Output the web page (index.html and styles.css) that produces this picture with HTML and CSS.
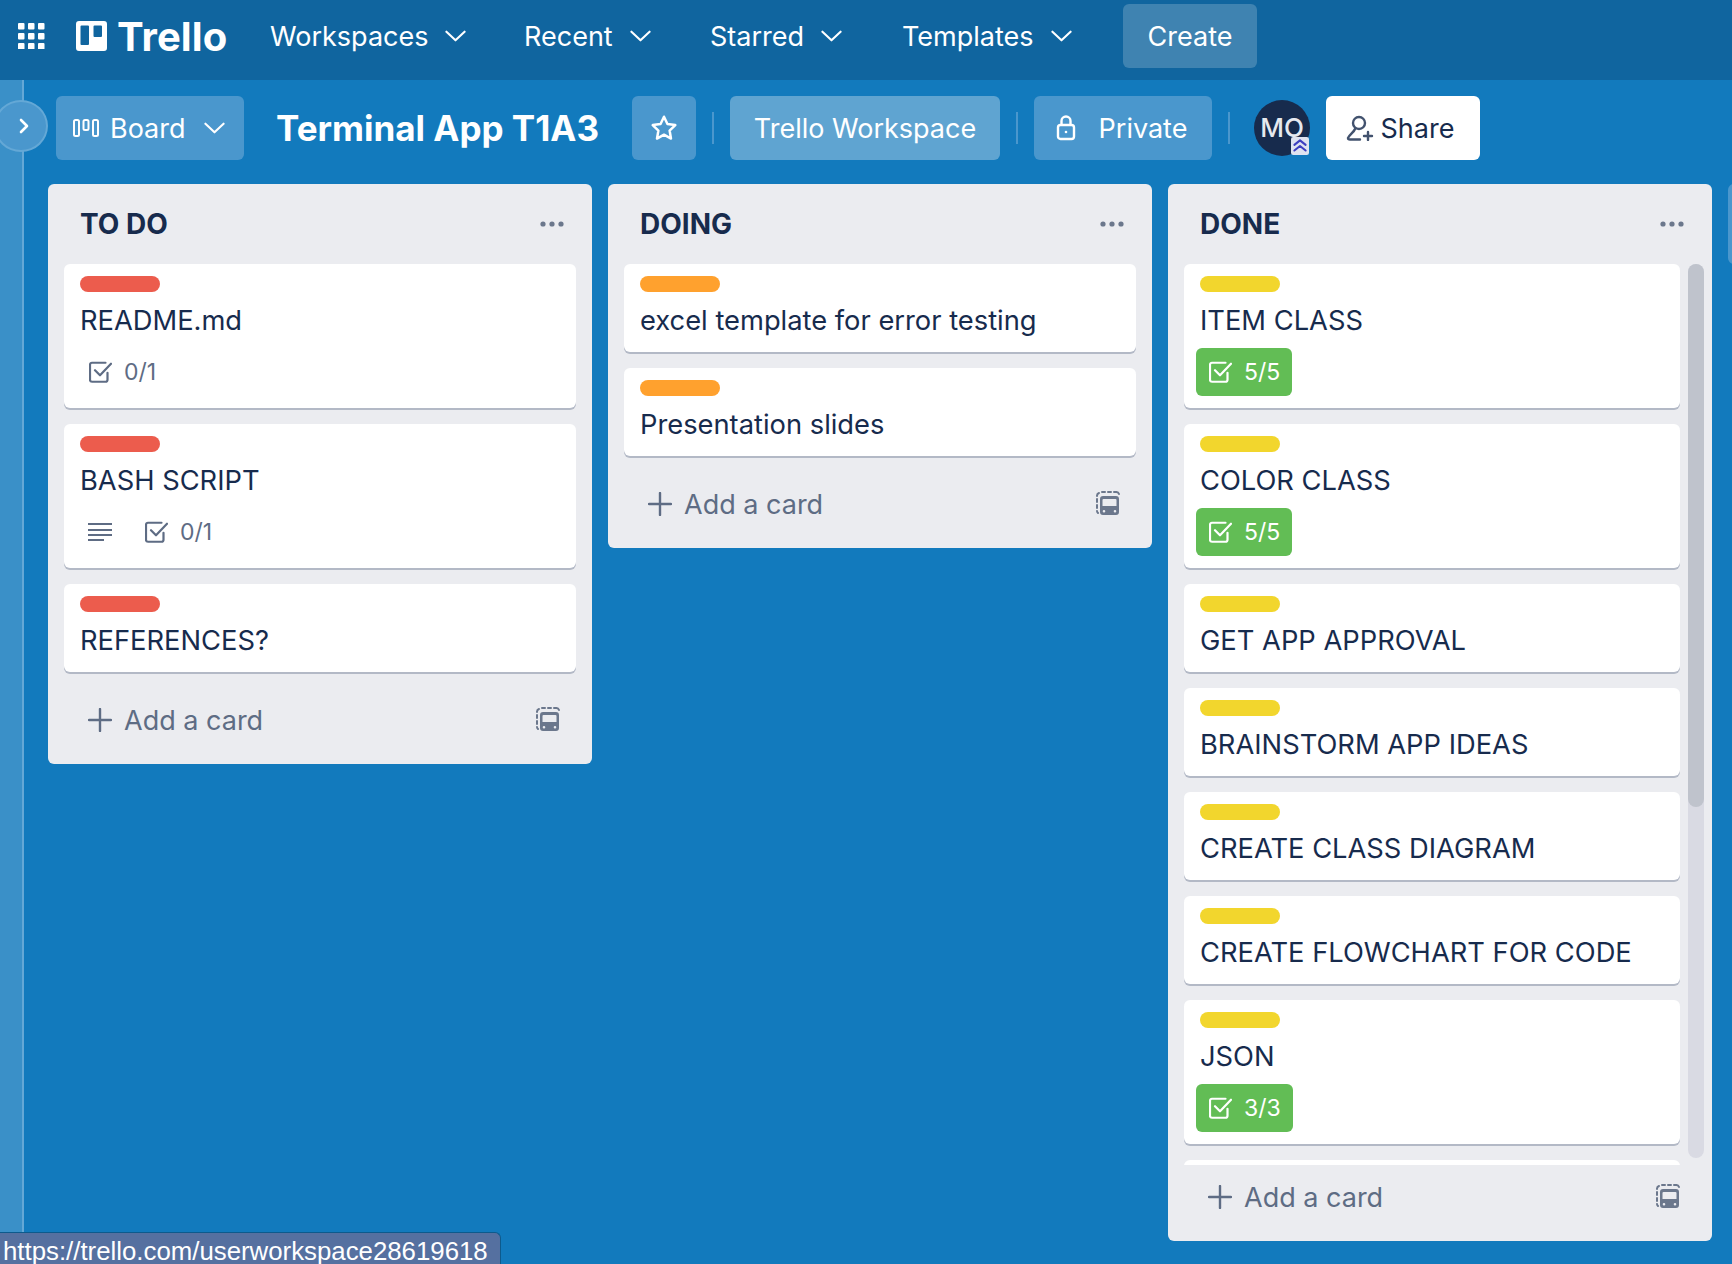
FILE: index.html
```html
<!DOCTYPE html>
<html>

<head>
    <meta charset="UTF-8">
    <title>Terminal App T1A3 | Trello</title>
    <link rel="stylesheet" href="styles.css">
</head>

<body>
    <svg class="icon-defs" xmlns="http://www.w3.org/2000/svg">
        <symbol id="i-chevron" viewBox="0 0 22 12">
            <path d="M1.5 1.5 11 10.5 20.5 1.5" fill="none" stroke="currentColor" stroke-width="2.2" stroke-linecap="round" stroke-linejoin="round" />
        </symbol>
        <symbol id="i-check" viewBox="0.500 1.500 23 21.500">
            <path d="M19 13v7a2 2 0 0 1-2 2H3.500a2 2 0 0 1-2-2V5a2 2 0 0 1 2-2H17" fill="none" stroke="currentColor" stroke-width="2.200" stroke-linecap="round" />
            <path d="M6.500 10.500 11.500 15.500 22.500 4" fill="none" stroke="currentColor" stroke-width="2.200" stroke-linecap="round" stroke-linejoin="round" />
        </symbol>
        <symbol id="i-desc" viewBox="0 0 24 20">
            <path d="M0 2h24M0 8h24M0 13h24M0 18h16" fill="none" stroke="currentColor" stroke-width="2.2" />
        </symbol>
        <symbol id="i-plus" viewBox="0 0 24 24">
            <path d="M12 1v22M1 12h22" fill="none" stroke="currentColor" stroke-width="2.4" stroke-linecap="round" />
        </symbol>
        <symbol id="i-template" viewBox="0 0 24 24">
            <path d="M1 8v3M1 14v3M1 5a3 3 0 0 1 2-3M6 1h3M12 1h3M18 1h2a3 3 0 0 1 3 2M1 20a3 3 0 0 0 1 2" fill="none" stroke="currentColor" stroke-width="2" stroke-linecap="round" />
            <path d="M7 5h13a3 3 0 0 1 3 3v13a3 3 0 0 1-3 3H7a3 3 0 0 1-3-3V8a3 3 0 0 1 3-3zM7.500 8a1 1 0 0 0-1 1v6h14V9a1 1 0 0 0-1-1zM8 19a1.300 1.300 0 1 0 0 2.600A1.300 1.300 0 0 0 8 19zm11 0a1.300 1.300 0 1 0 0 2.600 1.300 1.300 0 0 0 0-2.600z" fill="currentColor" fill-rule="evenodd" />
        </symbol>
        <symbol id="i-dots" viewBox="0 0 24 6">
            <circle cx="3" cy="3" r="2.600" fill="currentColor" />
            <circle cx="12" cy="3" r="2.600" fill="currentColor" />
            <circle cx="21" cy="3" r="2.600" fill="currentColor" />
        </symbol>
    </svg>

    <header class="topbar">
        <svg class="apps-icon" viewBox="0 0 27 26" fill="#fff">
            <rect x="0" y="0" width="6.500" height="6.500" rx="1" />
            <rect x="10" y="0" width="6.500" height="6.500" rx="1" />
            <rect x="20" y="0" width="6.500" height="6.500" rx="1" />
            <rect x="0" y="10" width="6.500" height="6.500" rx="1" />
            <rect x="10" y="10" width="6.500" height="6.500" rx="1" />
            <rect x="20" y="10" width="6.500" height="6.500" rx="1" />
            <rect x="0" y="20" width="6.500" height="6.500" rx="1" />
            <rect x="10" y="20" width="6.500" height="6.500" rx="1" />
            <rect x="20" y="20" width="6.500" height="6.500" rx="1" />
        </svg>
        <div class="logo">
            <svg class="logo-mark" viewBox="0 0 31 30">
                <path fill="#fff" fill-rule="evenodd" d="M3 0h25a3 3 0 0 1 3 3v24a3 3 0 0 1-3 3H3a3 3 0 0 1-3-3V3a3 3 0 0 1 3-3zM5.500 4.500a1 1 0 0 0-1 1V23a1 1 0 0 0 1 1h6.500a1 1 0 0 0 1-1V5.500a1 1 0 0 0-1-1zm13 0a1 1 0 0 0-1 1V15a1 1 0 0 0 1 1h6.500a1 1 0 0 0 1-1V5.500a1 1 0 0 0-1-1z" />
            </svg>
            <span class="logo-text">Trello</span>
        </div>
        <nav class="nav">
            <a class="nav-item nav-workspaces">Workspaces <svg class="chev"><use href="#i-chevron" /></svg></a>
            <a class="nav-item nav-recent">Recent <svg class="chev"><use href="#i-chevron" /></svg></a>
            <a class="nav-item nav-starred">Starred <svg class="chev"><use href="#i-chevron" /></svg></a>
            <a class="nav-item nav-templates">Templates <svg class="chev"><use href="#i-chevron" /></svg></a>
            <button class="create-btn">Create</button>
        </nav>
    </header>

    <div class="main">
        <aside class="sidebar">
            <button class="sidebar-toggle">
                <svg viewBox="0 0 10 16" width="10" height="16">
                    <path d="M2 2l6 6-6 6" fill="none" stroke="#fff" stroke-width="2.600" stroke-linecap="round" stroke-linejoin="round" />
                </svg>
            </button>
        </aside>

        <div class="content">
            <div class="boardbar">
                <button class="bar-btn btn-board">
                    <svg class="board-icon" viewBox="0 0 26 18" fill="none" stroke="#fff" stroke-width="2">
                        <rect x="1" y="1" width="5" height="16" rx="1.500" />
                        <rect x="10.500" y="1" width="5" height="10" rx="1.500" />
                        <rect x="20" y="1" width="5" height="16" rx="1.500" />
                    </svg>
                    Board
                    <svg class="chev"><use href="#i-chevron" /></svg>
                </button>
                <h1 class="board-title">Terminal App T1A3</h1>
                <button class="bar-btn btn-star">
                    <svg viewBox="0 0 26 26" width="28" height="28">
                        <path d="M13 2.500l3.200 6.800 7.300 1-5.300 5.100 1.300 7.400L13 19.200l-6.500 3.600 1.300-7.400L2.500 10.300l7.300-1z" fill="none" stroke="#fff" stroke-width="2.300" stroke-linejoin="round" />
                    </svg>
                </button>
                <span class="bar-divider"></span>
                <button class="bar-btn btn-workspace">Trello Workspace</button>
                <span class="bar-divider"></span>
                <button class="bar-btn btn-private">
                    <svg viewBox="0 0 20 26" width="20" height="26" fill="none" stroke="#fff" stroke-width="2.400">
                        <rect x="2" y="10" width="16" height="14" rx="2.500" />
                        <path d="M5.500 10V6a4.500 4.500 0 0 1 9 0v4" />
                        <circle cx="10" cy="17" r="1.300" fill="#fff" stroke="none" />
                    </svg>
                    Private
                </button>
                <span class="bar-divider"></span>
                <div class="avatar">
                    <span class="avatar-text">MO</span>
                    <svg class="avatar-badge" viewBox="0 0 16 16">
                        <rect width="16" height="16" rx="2" fill="#dfe3f0" />
                        <path d="M3 7l5-4 5 4M3 12l5-4 5 4" fill="none" stroke="#3d3fc0" stroke-width="1.800" stroke-linecap="round" stroke-linejoin="round" />
                    </svg>
                </div>
                <button class="bar-btn btn-share">
                    <svg viewBox="0 0 28 26" width="28" height="26" fill="none" stroke="#42526e" stroke-width="2.400" stroke-linecap="round">
                        <circle cx="13" cy="8" r="6" />
                        <path d="M9 14c-1 3-5 5-7 9 0 1 1 1.500 2 1.500h10" />
                        <path d="M22 17v8M18 21h8" />
                    </svg>
                    Share
                </button>
            </div>

            <div class="lists">
                <section class="list">
                    <div class="list-head">
                        <h2>TO DO</h2>
                        <svg class="dots"><use href="#i-dots" /></svg>
                    </div>
                    <div class="cards">
                        <article class="card">
                            <span class="label red"></span>
                            <div class="card-title">README.md</div>
                            <div class="badges">
                                <span class="badge"><svg class="badge-icon"><use href="#i-check" /></svg>0/1</span>
                            </div>
                        </article>
                        <article class="card">
                            <span class="label red"></span>
                            <div class="card-title">BASH SCRIPT</div>
                            <div class="badges">
                                <span class="badge badge-desc"><svg class="desc-icon"><use href="#i-desc" /></svg></span>
                                <span class="badge"><svg class="badge-icon"><use href="#i-check" /></svg>0/1</span>
                            </div>
                        </article>
                        <article class="card">
                            <span class="label red"></span>
                            <div class="card-title">REFERENCES?</div>
                        </article>
                    </div>
                    <div class="list-foot">
                        <span class="add-card"><svg class="plus"><use href="#i-plus" /></svg>Add a card</span>
                        <svg class="template"><use href="#i-template" /></svg>
                    </div>
                </section>

                <section class="list">
                    <div class="list-head">
                        <h2>DOING</h2>
                        <svg class="dots"><use href="#i-dots" /></svg>
                    </div>
                    <div class="cards">
                        <article class="card">
                            <span class="label orange"></span>
                            <div class="card-title">excel template for error testing</div>
                        </article>
                        <article class="card">
                            <span class="label orange"></span>
                            <div class="card-title">Presentation slides</div>
                        </article>
                    </div>
                    <div class="list-foot">
                        <span class="add-card"><svg class="plus"><use href="#i-plus" /></svg>Add a card</span>
                        <svg class="template"><use href="#i-template" /></svg>
                    </div>
                </section>

                <section class="list list-done">
                    <div class="list-head">
                        <h2>DONE</h2>
                        <svg class="dots"><use href="#i-dots" /></svg>
                    </div>
                    <div class="scroll-wrap">
                        <div class="cards">
                            <article class="card">
                                <span class="label yellow"></span>
                                <div class="card-title">ITEM CLASS</div>
                                <div class="badges">
                                    <span class="badge complete"><svg class="badge-icon"><use href="#i-check" /></svg>5/5</span>
                                </div>
                            </article>
                            <article class="card">
                                <span class="label yellow"></span>
                                <div class="card-title">COLOR CLASS</div>
                                <div class="badges">
                                    <span class="badge complete"><svg class="badge-icon"><use href="#i-check" /></svg>5/5</span>
                                </div>
                            </article>
                            <article class="card">
                                <span class="label yellow"></span>
                                <div class="card-title">GET APP APPROVAL</div>
                            </article>
                            <article class="card">
                                <span class="label yellow"></span>
                                <div class="card-title">BRAINSTORM APP IDEAS</div>
                            </article>
                            <article class="card">
                                <span class="label yellow"></span>
                                <div class="card-title">CREATE CLASS DIAGRAM</div>
                            </article>
                            <article class="card">
                                <span class="label yellow"></span>
                                <div class="card-title">CREATE FLOWCHART FOR CODE</div>
                            </article>
                            <article class="card">
                                <span class="label yellow"></span>
                                <div class="card-title">JSON</div>
                                <div class="badges">
                                    <span class="badge complete"><svg class="badge-icon"><use href="#i-check" /></svg>3/3</span>
                                </div>
                            </article>
                            <article class="card card-peek"></article>
                        </div>
                        <div class="scrollbar">
                            <div class="scrollbar-thumb"></div>
                        </div>
                    </div>
                    <div class="list-foot">
                        <span class="add-card"><svg class="plus"><use href="#i-plus" /></svg>Add a card</span>
                        <svg class="template"><use href="#i-template" /></svg>
                    </div>
                </section>

                <div class="add-list"></div>
            </div>
        </div>
    </div>

    <div class="status-link">https://trello.com/userworkspace28619618</div>
</body>

</html>
```

FILE: styles.css
```css
* {
    box-sizing: border-box;
}

html,
body {
    margin: 0;
    padding: 0;
    height: 100vh;
    overflow: hidden;
    font-family: Inter, "Liberation Sans", sans-serif;
    color: #172b4d;
    background-color: #127abd;
}

body {
    display: flex;
    flex-direction: column;
    position: relative;
}

button {
    font-family: inherit;
    border: none;
    cursor: pointer;
}

.icon-defs {
    width: 0;
    height: 0;
    position: absolute;
}

/* top nav */
.topbar {
    height: 80px;
    flex-shrink: 0;
    display: flex;
    align-items: center;
    padding-bottom: 8px;
    background-color: #10659f;
    color: #fff;
}

.apps-icon {
    width: 27px;
    height: 26px;
    margin-left: 18px;
    margin-right: 31px;
}

.logo {
    display: flex;
    align-items: center;
    width: 194px;
}

.logo-mark {
    width: 31px;
    height: 30px;
    margin-right: 10px;
}

.logo-text {
    font-size: 40px;
    font-weight: 700;
    letter-spacing: 0.1px;
}

.nav {
    display: flex;
    align-items: center;
}

.nav-item {
    display: flex;
    align-items: center;
    font-size: 27px;
    gap: 17px;
}

.nav-workspaces {
    width: 254px;
}

.nav-recent {
    width: 186px;
}

.nav-starred {
    width: 192px;
}

.nav-templates {
    width: 221px;
}

.chev {
    width: 21px;
    height: 12px;
    color: #fff;
}

.create-btn {
    width: 134px;
    height: 64px;
    border-radius: 6px;
    background-color: #3f83b1;
    color: #fff;
    font-size: 27px;
}

/* everything under the nav */
.main {
    flex: 1;
    display: flex;
    min-height: 0;
}

.sidebar {
    width: 24px;
    flex-shrink: 0;
    background-color: #3a90c8;
    border-right: 2px solid #64a8d6;
    position: relative;
}

.sidebar-toggle {
    position: absolute;
    left: -6px;
    top: 20px;
    width: 54px;
    height: 52px;
    border-radius: 50%;
    background-color: #4a97cd;
    border: 2px solid #64a8d6;
    display: flex;
    align-items: center;
    justify-content: center;
    padding: 0 0 0 6px;
}

.content {
    flex: 1;
    min-width: 0;
    overflow: hidden;
}

.boardbar {
    height: 104px;
    display: flex;
    align-items: center;
    padding-left: 32px;
    padding-bottom: 8px;
}

.bar-btn {
    height: 64px;
    border-radius: 6px;
    background-color: #4a97cd;
    color: #fff;
    font-size: 27px;
    display: flex;
    align-items: center;
    justify-content: center;
    flex-shrink: 0;
}

.btn-board {
    width: 188px;
    justify-content: flex-start;
    padding: 0 0 0 17px;
    gap: 11px;
}

.btn-board .chev {
    margin-left: 7px;
}

.board-icon {
    width: 26px;
    height: 18px;
}

.board-title {
    width: 356px;
    margin: 0 0 0 32px;
    font-size: 35px;
    font-weight: 700;
    color: #fff;
    white-space: nowrap;
}

.btn-star {
    width: 64px;
}

.bar-divider {
    width: 2px;
    height: 32px;
    margin: 0 16px;
    background-color: #4a97cd;
    flex-shrink: 0;
}

.btn-workspace {
    width: 270px;
    background-color: #5fa4d1;
}

.btn-private {
    width: 178px;
    padding: 0 3px 0 0;
    gap: 23px;
}

.avatar {
    width: 56px;
    height: 56px;
    margin-left: 8px;
    margin-right: 16px;
    border-radius: 50%;
    background-color: #172b4d;
    color: #e6e9ef;
    font-size: 26px;
    font-weight: 500;
    display: flex;
    align-items: center;
    justify-content: center;
    position: relative;
    flex-shrink: 0;
}

.avatar-text {
    margin-bottom: 2px;
}

.avatar-badge {
    position: absolute;
    right: 1px;
    bottom: 1px;
    width: 18px;
    height: 18px;
}

.btn-share {
    width: 154px;
    padding: 0 6px 0 0;
    background-color: #fff;
    color: #172b4d;
    gap: 7px;
}

/* lists */
.lists {
    display: flex;
    align-items: flex-start;
    gap: 16px;
    padding-left: 24px;
}

.list {
    width: 544px;
    flex-shrink: 0;
    background-color: #ebecf0;
    border-radius: 6px;
}

.list-head {
    height: 80px;
    display: flex;
    align-items: center;
    justify-content: space-between;
    padding: 0 28px 0 32px;
}

.list-head h2 {
    margin: 0;
    font-size: 28px;
    font-weight: 700;
    color: #172b4d;
}

.dots {
    width: 24px;
    height: 6px;
    color: #6b778c;
}

.cards {
    padding: 0 16px;
}

.card {
    display: block;
    background-color: #fff;
    border-radius: 6px;
    box-shadow: 0 2px 0 #b3b9c6;
    padding: 12px 16px;
    margin-bottom: 16px;
}

.card-peek {
    height: 88px;
}

.label {
    display: block;
    width: 80px;
    height: 16px;
    border-radius: 8px;
}

.red {
    background-color: #ec5c4d;
}

.orange {
    background-color: #ffa12e;
}

.yellow {
    background-color: #f2d62d;
}

.card-title {
    font-size: 27.300px;
    line-height: 42px;
    margin-top: 8px;
    margin-bottom: -2px;
    white-space: nowrap;
}

.badges {
    display: flex;
    margin: 8px 0 0 -4px;
}

.badge {
    height: 48px;
    display: flex;
    align-items: center;
    padding: 0 12px 0 13px;
    gap: 12px;
    border-radius: 6px;
    font-size: 23px;
    color: #5e6c84;
}

.badge-desc {
    width: 56px;
    padding: 0 12px;
}

.badge-icon {
    width: 23px;
    height: 22px;
}

.desc-icon {
    width: 24px;
    height: 20px;
}

.complete {
    background-color: #62bd55;
    color: #fff;
}

.list-foot {
    height: 64px;
    margin-bottom: 12px;
    display: flex;
    align-items: center;
    justify-content: space-between;
    padding: 0 32px 0 40px;
}

.add-card {
    display: flex;
    align-items: center;
    gap: 12px;
    font-size: 27px;
    color: #5e6c84;
}

.plus {
    width: 24px;
    height: 24px;
}

.template {
    width: 24px;
    height: 24px;
    margin-top: -2px;
    color: #6b778c;
}

/* DONE scrolls */
.scroll-wrap {
    height: 901px;
    overflow: hidden;
    display: flex;
}

.list-done .cards {
    width: 520px;
    padding: 0 8px 0 16px;
    flex-shrink: 0;
}

.scrollbar {
    width: 16px;
    height: 894px;
    border-radius: 8px;
    background-color: #d9dae3;
    flex-shrink: 0;
}

.scrollbar-thumb {
    height: 543px;
    border-radius: 8px;
    background-color: #bfc3cc;
}

.add-list {
    width: 100px;
    height: 80px;
    flex-shrink: 0;
    border-radius: 6px;
    background-color: #4a97cd;
}

.status-link {
    position: absolute;
    left: 0;
    bottom: 0;
    width: 501px;
    height: 32px;
    padding-left: 3px;
    background-color: #5570a0;
    border-top: 1px solid #0d5a8c;
    border-right: 1px solid #0d5a8c;
    border-top-right-radius: 6px;
    color: #fff;
    font-family: "Liberation Sans", sans-serif;
    font-size: 25.800px;
    line-height: 37px;
    white-space: nowrap;
    overflow: hidden;
}
```
